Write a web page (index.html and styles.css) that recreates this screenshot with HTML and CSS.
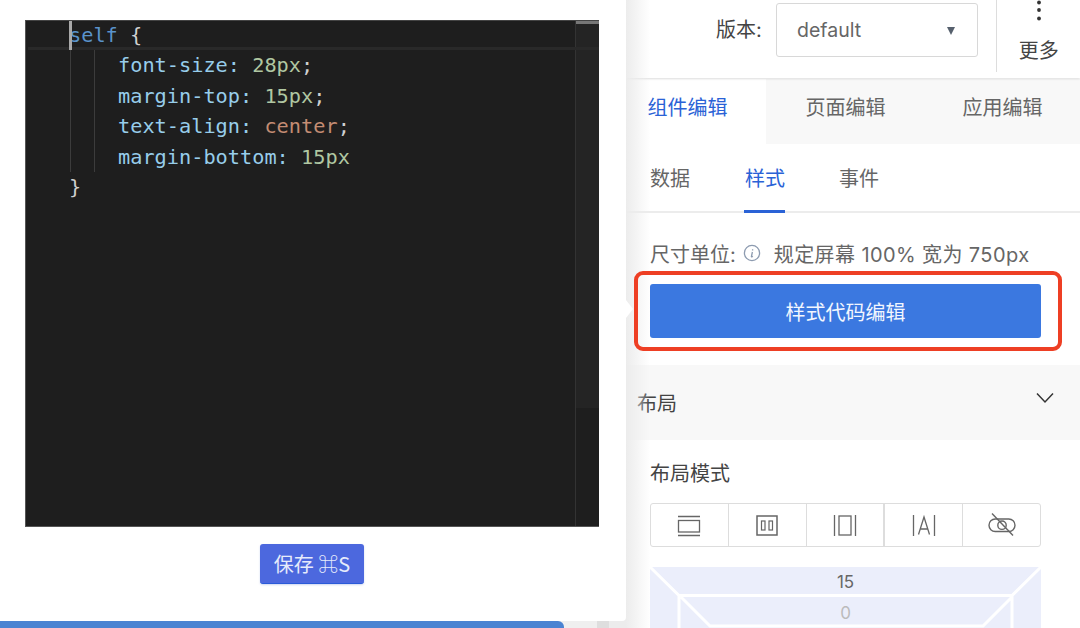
FILE: index.html
```html
<!DOCTYPE html>
<html lang="zh">
<head>
<meta charset="utf-8">
<title>样式代码编辑</title>
<link rel="stylesheet" href="styles.css">
</head>
<body>
<div class="page">
  <div class="left-bg">
    <section class="modal">
      <div class="editor">
        <div class="code">
          <div class="line"><span class="kw">self</span> <span class="pn">{</span></div>
          <div class="line in"><span class="pr">font-size:</span> <span class="nm">28px</span><span class="pn">;</span></div>
          <div class="line in"><span class="pr">margin-top:</span> <span class="nm">15px</span><span class="pn">;</span></div>
          <div class="line in"><span class="pr">text-align:</span> <span class="st">center</span><span class="pn">;</span></div>
          <div class="line in"><span class="pr">margin-bottom:</span> <span class="nm">15px</span></div>
          <div class="line"><span class="pn">}</span></div>
        </div>
        <div class="minimap"><div class="slider"></div></div>
        <i class="band"></i>
        <i class="cursor"></i>
        <i class="guide g1"></i>
        <i class="guide g2"></i>
      </div>
      <div class="save-row"><button class="save">保存 ⌘S</button></div>
      <i class="arrow"></i>
    </section>
    <div class="bluebar"></div>
  </div>
  <aside class="panel">
    <header class="top">
      <span class="ver-label">版本:</span>
      <div class="select"><span>default</span><i class="caret"></i></div>
      <div class="more">
        <svg class="dots" width="6" height="22" viewBox="0 0 6 22"><circle cx="3" cy="2.5" r="1.9"/><circle cx="3" cy="10" r="1.9"/><circle cx="3" cy="18.5" r="1.9"/></svg>
        <span>更多</span>
      </div>
    </header>
    <nav class="tabs">
      <span class="tab on">组件编辑</span>
      <span class="tab t2">页面编辑</span>
      <span class="tab t3">应用编辑</span>
    </nav>
    <nav class="subtabs">
      <span class="sub s1">数据</span>
      <span class="sub s2 on">样式</span>
      <span class="sub s3">事件</span>
    </nav>
    <div class="unit">
      <span>尺寸单位:</span>
      <svg class="info" width="18" height="18" viewBox="0 0 18 18"><circle cx="9" cy="9" r="7.6" fill="none" stroke="#8d9bb0" stroke-width="1.3"/><path d="M9.6 5.2v1.2M9.4 8 8.4 12.6c0 .5.6.5 1.4-.3" fill="none" stroke="#8d9bb0" stroke-width="1.3"/></svg>
      <span class="unit-text">规定屏幕 100% 宽为 750px</span>
    </div>
    <div class="primary-wrap">
      <button class="primary">样式代码编辑</button>
      <i class="redbox"></i>
    </div>
    <div class="section-head">
      <span>布局</span>
      <svg width="18" height="12" viewBox="0 0 18 12"><path d="M1 1.5 9 10l8-8.500" fill="none" stroke="#333" stroke-width="1.500"/></svg>
    </div>
    <div class="layout">
      <div class="layout-title">布局模式</div>
      <div class="modes">
        <span class="mode">
          <svg width="24" height="24" viewBox="0 0 24 24"><path d="M1 3.500h22M1 22.500h22" stroke="#666" stroke-width="1.300" fill="none"/><rect x="1.500" y="7.500" width="21" height="11.500" stroke="#666" stroke-width="1.300" fill="none"/></svg>
        </span>
        <span class="mode">
          <svg width="24" height="24" viewBox="0 0 24 24"><rect x="2" y="3" width="20" height="19" stroke="#666" stroke-width="1.500" fill="none"/><rect x="6.500" y="8" width="3.500" height="9" stroke="#666" stroke-width="1.200" fill="none"/><rect x="14" y="8" width="3.500" height="9" stroke="#666" stroke-width="1.200" fill="none"/></svg>
        </span>
        <span class="mode">
          <svg width="24" height="24" viewBox="0 0 24 24"><path d="M1.500 2v21M22.500 2v21" stroke="#666" stroke-width="1.300" fill="none"/><rect x="6" y="3" width="12" height="19" stroke="#666" stroke-width="1.300" fill="none"/></svg>
        </span>
        <span class="mode thick">
          <svg width="24" height="24" viewBox="0 0 24 24"><path d="M1.500 2v21M22.500 2v21M6.500 21.500 12 4l5.500 17.500M8.200 16h7.600" stroke="#666" stroke-width="1.300" fill="none"/></svg>
        </span>
        <span class="mode last">
          <svg width="28" height="24" viewBox="0 0 28 24"><rect x="1" y="6" width="26" height="12.500" rx="6.200" stroke="#666" stroke-width="1.400" fill="none"/><circle cx="14" cy="12.200" r="4.200" stroke="#666" stroke-width="1.400" fill="none"/><path d="M4 .5 25 22.500" stroke="#666" stroke-width="1.400" fill="none"/></svg>
        </span>
      </div>
      <svg class="box" width="391" height="61" viewBox="0 0 391 61">
        <rect width="391" height="61" fill="#ebeefb"/>
        <path d="M0 0 29 28.500H362L391 0M29 28.500V61M362 28.500V61M31 30 60 59H333L362 30" fill="none" stroke="#fff" stroke-width="3"/>
        <text class="num" x="195.500" y="20.500">15</text>
        <text class="num zero" x="195.500" y="51.500">0</text>
      </svg>
    </div>
  </aside>
</div>
</body>
</html>
```
FILE: styles.css
```css
* { box-sizing: border-box; }
html, body { margin: 0; padding: 0; }
body {
  width: 1080px;
  height: 628px;
  overflow: hidden;
  background: #fff;
  font-family: "Inter", "Noto Sans CJK SC", sans-serif;
  color: #555;
}
button { font-family: inherit; border: 0; padding: 0; }
.page { display: flex; width: 1080px; height: 628px; }

.left-bg {
  width: 626px;
  flex: none;
  display: flex;
  flex-direction: column;
  background: linear-gradient(to right, #efefef 597px, #dedede 597px, #dedede 609px, #ececec 609px);
}
.modal {
  position: relative;
  z-index: 2;
  height: 621px;
  flex: none;
  padding: 20px 27px 0 25px;
  background: #fff;
  border-bottom-right-radius: 4px;
}
.bluebar {
  width: 564px;
  height: 7px;
  background: #4a83d2;
  border-top-right-radius: 6px;
}
.editor {
  position: relative;
  display: flex;
  height: 507px;
  background: #1e1e1e;
  border-top: 1px solid #444;
  border-bottom: 1px solid #555;
  border-left: 1px solid #555;
}
.code {
  flex: 1;
  margin-top: -1px;
  font-family: "DejaVu Sans Mono", "Liberation Mono", monospace;
  font-size: 20.27px;
  line-height: 30.4px;
  padding-left: 43px;
  color: #d4d4d4;
}
.line { height: 30.4px; white-space: pre; }
.line.in { padding-left: 49px; }
.kw { color: #5a93cb; }
.pr { color: #97cdea; }
.nm { color: #b0c7a2; }
.st { color: #c48c73; }
.pn { color: #d0d0d0; }
.minimap {
  width: 24px;
  flex: none;
  background: #1e1e1e;
  border-left: 1px solid #333;
}
.slider { height: 387px; background: #242424; border-top: 3px solid #777; }
.band { position: absolute; left: 2px; right: 0; top: 26px; height: 3px; background: #292929; }
.cursor { position: absolute; left: 43px; top: 0; width: 3px; height: 29px; background: #a9a9a9; }
.guide { position: absolute; top: 29px; height: 122px; width: 1px; background: #3c3c3c; }
.g1 { left: 44px; }
.g2 { left: 68px; }

.save-row { display: flex; justify-content: center; padding-top: 17px; }
.save {
  width: 104px;
  height: 40px;
  border-radius: 3px;
  border-bottom: 1px solid #2a5bd8;
  background: #4c68de;
  color: #e6ebfb;
  font-size: 20px;
  line-height: 38px;
  font-family: "Noto Sans CJK SC", sans-serif;
  box-shadow: 0 1px 2px rgba(60, 90, 200, .25);
}
.arrow {
  position: absolute;
  left: 626px;
  top: 300px;
  width: 0;
  height: 0;
  border-top: 9px solid transparent;
  border-bottom: 9px solid transparent;
  border-left: 7px solid #fff;
}

.panel {
  position: relative;
  width: 454px;
  flex: none;
  background: #fff;
  overflow: hidden;
}
.panel::before {
  content: "";
  position: absolute;
  left: 0;
  top: 0;
  bottom: 0;
  width: 24px;
  background: linear-gradient(to right, #ececec, rgba(255, 255, 255, 0));
  z-index: 1;
}
.top {
  position: relative;
  display: flex;
  height: 78px;
  padding-left: 90px;
  box-shadow: 0 1px 2px rgba(0, 0, 0, .14);
}
.ver-label { width: 60px; font-size: 20px; line-height: 60px; color: #444; flex: none; }
.select {
  display: flex;
  align-items: center;
  justify-content: space-between;
  width: 203px;
  height: 54px;
  margin-top: 3px;
  padding: 0 22px 0 20px;
  border: 1px solid #d8d8d8;
  border-radius: 3px;
  font-size: 19.500px;
  color: #666;
}
.caret {
  width: 0;
  height: 0;
  border-left: 4.500px solid transparent;
  border-right: 4.500px solid transparent;
  border-top: 8px solid #56606d;
  margin-top: 2px;
}
.more {
  display: flex;
  flex-direction: column;
  align-items: center;
  width: 84px;
  height: 72px;
  margin-left: 18px;
  border-left: 1px solid #ddd;
  font-size: 20px;
  color: #444;
}
.dots { fill: #333; flex: none; margin-bottom: 5px; }
.more span { line-height: 48px; }
.tabs {
  display: flex;
  height: 65px;
  margin-top: 1px;
  background: #f8f8f8;
  font-size: 20px;
  line-height: 59px;
  color: #666;
}
.tab { flex: none; }
.tab.on { width: 140px; padding-left: 21.500px; background: #fff; color: #2a62d6; }
.t2 { margin-left: 39.500px; }
.t3 { margin-left: 77px; }
.subtabs {
  display: flex;
  height: 69px;
  border-bottom: 2px solid #ececec;
  padding-left: 24px;
  font-size: 20px;
  line-height: 70px;
  color: #666;
}
.sub { height: 69px; }
.s2 { margin-left: 54px; padding-left: 1px; margin-right: 54px; }
.sub.on { color: #2a62d6; border-bottom: 3px solid #2a62d6; }
.unit {
  display: flex;
  align-items: center;
  height: 71px;
  padding: 9px 0 0 24px;
  font-size: 20px;
  color: #666;
}
.info { margin: 0 0 0 7px; flex: none; }
.unit-text { margin-left: 13px; white-space: pre; letter-spacing: .4px; }
.primary-wrap { position: relative; height: 81px; padding: 0 39px 0 24px; }
.primary {
  display: block;
  width: 391px;
  height: 54px;
  border-radius: 3px;
  background: #3b78e0;
  color: #f2f6fe;
  font-size: 20px;
}
.redbox {
  position: absolute;
  z-index: 2;
  left: 8px;
  top: -13px;
  width: 428px;
  height: 80px;
  border: 4px solid #ee3f24;
  border-radius: 9px;
}
.section-head {
  display: flex;
  align-items: center;
  justify-content: space-between;
  height: 75px;
  padding: 0 26px 0 11px;
  background: #f8f8f8;
  font-size: 20px;
  color: #444;
}
.section-head svg { margin-top: -10px; }
.layout { padding: 0 39px 0 24px; }
.layout-title { height: 63px; padding-top: 19px; font-size: 20px; line-height: 30px; color: #444; }
.modes {
  display: flex;
  height: 44px;
  border: 1px solid #ddd;
  border-radius: 3px;
}
.mode {
  flex: 1;
  display: flex;
  align-items: center;
  justify-content: center;
  border-right: 1px solid #ddd;
}
.mode.thick { border-left: 1px solid #ddd; }
.mode.last { border-right: 0; }
.box { display: block; margin-top: 20px; }
.num { font-size: 17px; fill: #666; text-anchor: middle; }
.zero { fill: #bbb; }
```
